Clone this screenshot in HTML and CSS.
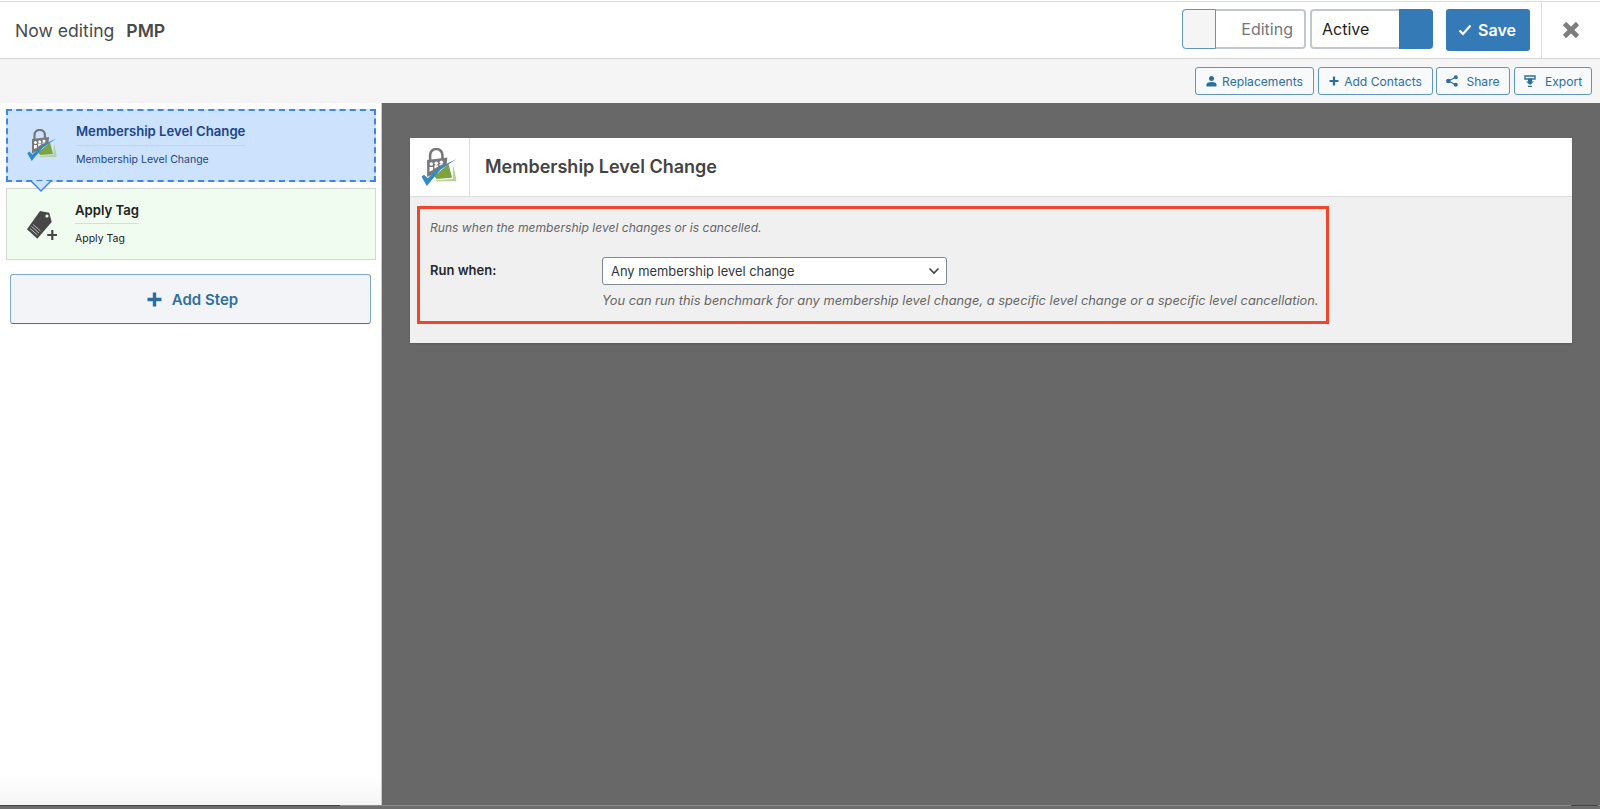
FILE: index.html
```html
<!DOCTYPE html>
<html lang="en">
<head>
    <meta charset="UTF-8">
    <meta name="viewport" content="width=device-width, initial-scale=1.0">
    <title>Now editing PMP</title>
    <link rel="stylesheet" href="styles.css">
</head>
<body>

    <svg class="defs" width="0" height="0">
        <symbol id="pmpLogo" viewBox="0 0 30 32">
            <path d="M7.500 10V6a5.200 5.200 0 0 1 10.400 0V9" fill="none" stroke="#77787b" stroke-width="2.200"/>
            <path d="M5 10 22 8 21.500 13.500 12 21 5 24.500z" fill="#77787b"/>
            <circle cx="8.500" cy="13.500" r="1.500" fill="#fff"/>
            <circle cx="12.700" cy="12.800" r="1.500" fill="#fff"/>
            <circle cx="17" cy="12" r="1.500" fill="#fff"/>
            <path d="M7 20v-4h3v2.500zM11.200 17.500v-3h3v1zM15.500 15v-1.500h3z" fill="#fff"/>
            <path d="M13 27 26.500 26 27 14 29.500 26 29.500 28 12 28z" fill="#b9cf9c"/>
            <path d="M11 23.500 23 13.500 26 25 13 26z" fill="#7da33f"/>
            <path d="M0.300 24.300 2.300 22.500 5.500 25.500 15 16.500 29.700 9.300 16 18.500 4.700 32z" fill="#2f8ac6"/>
        </symbol>
    </svg>

    <div class="app">

        <!-- top bar -->
        <div class="header">
            <div class="header-title">Now editing <b>PMP</b></div>
            <div class="toggle toggle-off">
                <span class="toggle-knob"></span>
                <span class="toggle-label">Editing</span>
            </div>
            <div class="toggle toggle-on">
                <span class="toggle-label">Active</span>
                <span class="toggle-knob"></span>
            </div>
            <a href="#" class="save-button">
                <svg width="14" height="12" viewBox="0 0 14 12"><path d="M1.500 6.500 5 10 12.500 1.500" fill="none" stroke="#fff" stroke-width="2.200"/></svg>
                Save
            </a>
            <a href="#" class="close-button">
                <svg width="18" height="18" viewBox="0 0 18 18"><path d="M2.500 2.500 15.500 15.500M15.500 2.500 2.500 15.500" fill="none" stroke="#7d7d7d" stroke-width="4.600"/></svg>
            </a>
        </div>

        <!-- actions -->
        <div class="toolbar">
            <a href="#" class="tool-button tool-replacements">
                <svg width="11" height="12" viewBox="0 0 11 12"><circle cx="5.500" cy="3.500" r="2.500" fill="#2c6f9f"/><path d="M0.500 11.500V9.500C0.500 7.800 2.500 7 5.500 7S10.500 7.800 10.500 9.500V11.500z" fill="#2c6f9f"/></svg>
                Replacements
            </a>
            <a href="#" class="tool-button tool-contacts">
                <svg width="10" height="10" viewBox="0 0 10 10"><path d="M5 0.500V9.500M0.500 5H9.500" stroke="#2c6f9f" stroke-width="2.200"/></svg>
                Add Contacts
            </a>
            <a href="#" class="tool-button tool-share">
                <svg width="12" height="12" viewBox="0 0 12 12"><path d="M10 2 2.500 6 10 10" fill="none" stroke="#2c6f9f" stroke-width="1.200"/><circle cx="9.800" cy="2.200" r="2" fill="#2c6f9f"/><circle cx="2.300" cy="6" r="2.200" fill="#2c6f9f"/><circle cx="9.800" cy="9.800" r="2" fill="#2c6f9f"/></svg>
                Share
            </a>
            <a href="#" class="tool-button tool-export">
                <svg width="12" height="12" viewBox="0 0 12 12"><path d="M1 1H11V4H1z" fill="none" stroke="#2c6f9f" stroke-width="1.400"/><path d="M4 3.500H8V6.500H10L6 10 2 6.500H4z" fill="#2c6f9f"/><path d="M4 10.800H8V12H4z" fill="#2c6f9f"/></svg>
                Export
            </a>
        </div>

        <div class="content">

            <!-- steps -->
            <div class="sidebar">
                <div class="step step-active">
                    <svg class="step-icon" width="30" height="32"><use href="#pmpLogo"/></svg>
                    <div class="step-text">
                        <div class="step-title">Membership Level Change</div>
                        <div class="step-sub">Membership Level Change</div>
                    </div>
                    <svg class="step-arrow" width="24" height="12" viewBox="0 0 24 12"><path d="M2 0 12 10 22 0" fill="#cce2fd" stroke="#3f87e6" stroke-width="1.500"/></svg>
                </div>
                <div class="step step-action">
                    <svg class="step-icon" width="30" height="30" viewBox="0 0 30 30">
                        <path d="M13 0 22.300 1.700 24.700 11 10.300 27.700 0 18.300z" fill="#474747"/>
                        <circle cx="20" cy="5" r="1.600" fill="#f1fcf1"/>
                        <path d="M3 17.500 10.500 24M4.500 15.500 12 22M6 13.500 13.500 20" stroke="#c9c9c9" stroke-width="0.900"/>
                        <path d="M25.300 19V29M20.300 24H30" stroke="#474747" stroke-width="2.200"/>
                    </svg>
                    <div class="step-text">
                        <div class="step-title">Apply Tag</div>
                        <div class="step-sub">Apply Tag</div>
                    </div>
                </div>
                <a href="#" class="add-step">
                    <svg width="15" height="15" viewBox="0 0 15 15"><path d="M7.500 0.500V14.500M0.500 7.500H14.500" stroke="#2c6f9f" stroke-width="3.400"/></svg>
                    Add Step
                </a>
            </div>

            <!-- settings -->
            <div class="main">
                <div class="panel">
                    <div class="panel-header">
                        <div class="panel-icon">
                            <svg width="38" height="38"><use href="#pmpLogo"/></svg>
                        </div>
                        <h2 class="panel-title">Membership Level Change</h2>
                    </div>
                    <div class="panel-body">
                        <div class="highlight">
                            <p class="panel-note">Runs when the membership level changes or is cancelled.</p>
                            <div class="form-row">
                                <label class="form-label" for="runWhen">Run when:</label>
                                <div class="form-field">
                                    <div class="select-wrap">
                                        <select id="runWhen" class="select">
                                            <option>Any membership level change</option>
                                        </select>
                                        <svg class="select-arrow" width="12" height="8" viewBox="0 0 12 8"><path d="M1.500 1.500 6 6 10.500 1.500" fill="none" stroke="#3c434a" stroke-width="1.600"/></svg>
                                    </div>
                                    <p class="form-desc">You can run this benchmark for any membership level change, a specific level change or a specific level cancellation.</p>
                                </div>
                            </div>
                        </div>
                    </div>
                </div>
            </div>

        </div>

        <div class="window-edge">
            <span class="edge-dark"></span>
            <span class="edge-dark-end"></span>
        </div>
    </div>

</body>
</html>
```

FILE: styles.css
```css
* {
    box-sizing: border-box;
}

body {
    margin: 0;
    padding: 0;
    background-color: #fff;
    color: #444;
    font-family: Inter, 'Liberation Sans', sans-serif;
}

a {
    text-decoration: none;
}

.defs {
    display: block;
    height: 0;
}

.app {
    display: flex;
    flex-direction: column;
    height: 809px;
    padding-top: 1px;
    overflow: hidden;
}

/* top bar */
.header {
    display: flex;
    flex: none;
    height: 58px;
    padding-top: 7px;
    background-color: #fff;
    border-top: 1px solid #ddd;
    border-bottom: 1px solid #d6d6d6;
}

.header-title {
    flex: 1;
    padding-top: 11px;
    padding-left: 15px;
    font-size: 17.6px;
    line-height: 22px;
    color: #4a4a4a;
}

.header-title b {
    margin-left: 7px;
    font-weight: 600;
}

.toggle {
    display: flex;
    align-items: stretch;
    height: 40px;
    background-color: #fff;
    border: 2px solid #c3c8ce;
    border-radius: 4px;
    font-size: 16px;
    line-height: 36px;
}

.toggle-off {
    width: 124px;
    margin-right: 4px;
    color: #72777c;
}

.toggle-off .toggle-knob {
    width: 34px;
    margin: -2px 0 -2px -2px;
    background-color: #f5f5f5;
    border: 1px solid #5e96bf;
    border-radius: 4px 0 0 4px;
}

.toggle-off .toggle-label {
    margin-left: auto;
    padding-right: 11px;
}

.toggle-on {
    width: 123px;
    color: #1d1d1d;
}

.toggle-on .toggle-label {
    flex: 1;
    padding-left: 10px;
}

.toggle-on .toggle-knob {
    width: 34px;
    margin: -2px -2px -2px 0;
    background-color: #337ab7;
    border-radius: 0 4px 4px 0;
}

.save-button {
    display: flex;
    align-items: center;
    justify-content: center;
    gap: 6px;
    width: 84px;
    height: 42px;
    margin-left: 13px;
    padding-right: 2px;
    background-color: #337ab7;
    border-radius: 3px;
    color: #fff;
    font-size: 16px;
    font-weight: 600;
}

.close-button {
    display: flex;
    align-items: center;
    justify-content: center;
    width: 59px;
    margin-top: -7px;
    margin-left: 11px;
    padding-right: 1px;
    border-left: 1px solid #ddd;
}

/* actions */
.toolbar {
    display: flex;
    flex: none;
    justify-content: flex-end;
    height: 44px;
    padding: 8px 8px 0 0;
    background-color: #f5f5f5;
}

.tool-button {
    display: flex;
    align-items: center;
    justify-content: center;
    gap: 5px;
    height: 28px;
    background-color: #f7f9fa;
    border: 1px solid #5e96bf;
    border-radius: 3px;
    color: #2c6f9f;
    font-size: 12.1px;
}

.tool-replacements {
    width: 119px;
}

.tool-contacts {
    width: 115px;
    margin-left: 4px;
}

.tool-share {
    width: 74px;
    margin-left: 3px;
    gap: 8px;
}

.tool-export {
    width: 78px;
    margin-left: 4px;
    gap: 9px;
}

.content {
    display: flex;
    flex: 1;
    min-height: 0;
}

/* steps */
.sidebar {
    flex: none;
    width: 382px;
    padding-top: 6px;
    background: linear-gradient(to bottom, #fff 96%, #f5f5f5);
    border-right: 1px solid #c8c8c8;
}

.step {
    position: relative;
    display: flex;
    align-items: center;
    width: 370px;
    margin-left: 6px;
}

.step-icon {
    flex: none;
}

.step-active {
    z-index: 1;
    height: 73px;
    padding-left: 19px;
    padding-bottom: 1px;
    background-color: #cce2fd;
    border: 2px dashed #3f87e6;
    color: #1c4587;
}

.step-action {
    height: 72px;
    margin-top: 6px;
    padding-left: 20px;
    background-color: #f1fcf1;
    border: 1px solid #d2d7d4;
    color: #222;
}

.step-action .step-icon {
    margin-top: 4px;
}

.step-text {
    margin-left: 19px;
}

.step-action .step-text {
    margin-left: 18px;
}

.step-title {
    padding-bottom: 5px;
    font-size: 13.15px;
    line-height: 18px;
    font-weight: 600;
    border-bottom: 1px solid #b9d6f5;
}

.step-action .step-title {
    padding-bottom: 4px;
    border-bottom-color: #d8dcda;
}

.step-sub {
    margin-top: 6px;
    font-size: 10.5px;
    line-height: 16px;
}

.step-action .step-sub {
    margin-top: 7px;
}

.step-arrow {
    position: absolute;
    left: 21px;
    bottom: -13px;
}

.add-step {
    display: flex;
    align-items: center;
    justify-content: center;
    gap: 10px;
    width: 361px;
    height: 50px;
    margin: 14px 0 0 10px;
    padding-left: 4px;
    background-color: #f2f4f7;
    border: 1px solid #7fa9c9;
    border-bottom-color: #3c78a8;
    border-radius: 3px;
    color: #2c6f9f;
    font-size: 15px;
    font-weight: 600;
}

/* settings */
.main {
    flex: 1;
    padding: 35px 28px 0;
    background-color: #686868;
}

.panel {
    background-color: #f0f0f0;
    box-shadow: 0 1px 2px rgba(0, 0, 0, 0.15);
}

.panel-header {
    display: flex;
    align-items: stretch;
    height: 59px;
    background-color: #fff;
    border-bottom: 1px solid #ddd;
}

.panel-icon {
    display: flex;
    align-items: center;
    flex: none;
    width: 60px;
    padding-left: 10px;
    border-right: 1px solid #ddd;
}

.panel-title {
    margin: 0;
    padding-left: 15px;
    font-size: 18px;
    line-height: 58px;
    font-weight: 600;
    color: #444;
}

.panel-body {
    padding: 9px 7px 19px;
}

.highlight {
    width: 912px;
    padding: 10px 10px 11px;
    border: 3px solid #f0472c;
}

.panel-note {
    margin: 0;
    font-size: 12.1px;
    line-height: 18px;
    font-style: italic;
    color: #666;
}

.form-row {
    display: flex;
    margin-top: 20px;
}

.form-label {
    flex: none;
    width: 172px;
    padding-top: 2px;
    font-size: 13px;
    line-height: 22px;
    font-weight: 600;
    color: #23282d;
}

.form-field {
    flex: 1;
}

.select-wrap {
    position: relative;
    width: 345px;
}

.select {
    display: block;
    width: 100%;
    height: 28px;
    padding: 0 24px 0 8px;
    appearance: none;
    background-color: #fff;
    border: 1px solid #7e8993;
    border-radius: 3px;
    color: #32373c;
    font-family: inherit;
    font-size: 12.9px;
}

.select-arrow {
    position: absolute;
    top: 10px;
    right: 7px;
    pointer-events: none;
}

.form-desc {
    margin: 7px 0 0;
    font-size: 12.85px;
    line-height: 18px;
    font-style: italic;
    color: #666;
    white-space: nowrap;
}

/* bottom of the window */
.window-edge {
    display: flex;
    justify-content: space-between;
    flex: none;
    height: 4px;
    background: linear-gradient(to bottom, #8c8c8c 1px, #6e6e6e 1px);
}

.edge-dark {
    width: 340px;
    height: 1px;
    background-color: #444;
}

.edge-dark-end {
    width: 27px;
    height: 1px;
    margin-right: 2px;
    background-color: #444;
}
```
